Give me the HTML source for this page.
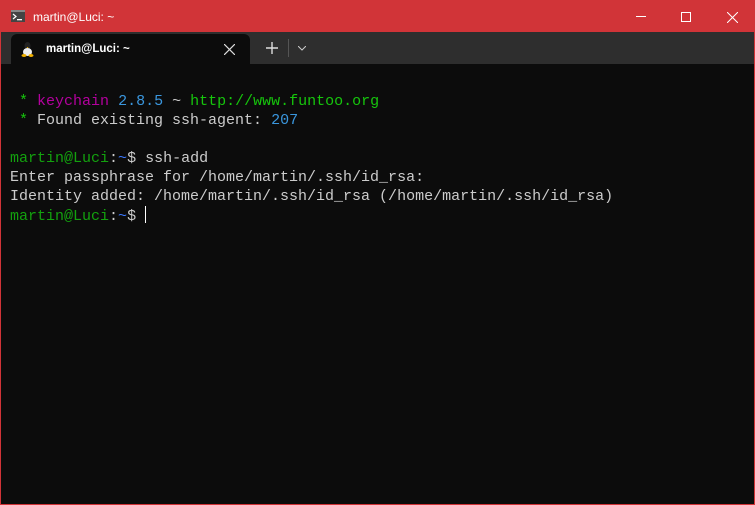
<!DOCTYPE html>
<html><head><meta charset="utf-8"><style>
*{margin:0;padding:0;box-sizing:border-box}
html,body{width:755px;height:505px;overflow:hidden;background:#0c0c0c}
.win{position:absolute;left:0;top:0;width:755px;height:505px;border:1px solid #d13438;background:#0c0c0c}
.title{position:absolute;left:0;top:0;width:753px;height:31px;background:#d13438;color:#fff;font:12px "Liberation Sans",sans-serif}
.tabbar{position:absolute;left:0;top:31px;width:753px;height:32px;background:#2e2e2e}
.tab{position:absolute;left:10px;top:2px;width:239px;height:30px;background:#0c0c0c;border-radius:6px 6px 0 0;color:#fff;font:bold 11.5px "Liberation Sans",sans-serif}
.term{position:absolute;left:9px;top:91px;font:15px/19px "Liberation Mono",monospace;letter-spacing:0;color:#cccccc;white-space:pre}
.g{color:#16c60c}.m{color:#b4009e}.b{color:#3a96dd}.bl{color:#3b78ff}.gg{color:#13a10e}
</style></head><body><div class="win">
<div class="title">
<svg style="position:absolute;left:10px;top:9px" width="14" height="12"><rect x="0" y="0" width="14" height="12" fill="#444"/><rect x="0" y="0" width="14" height="2" fill="#888"/><path d="M2 4l3 2.5-3 2.5" stroke="#fff" fill="none" stroke-width="1.2"/><rect x="6" y="9" width="5" height="1.3" fill="#fff"/></svg>
<span style="position:absolute;left:32px;top:9px">martin@Luci: ~</span>
<div style="position:absolute;left:635px;top:15px;width:10px;height:1px;background:#fff"></div>
<div style="position:absolute;left:680px;top:11px;width:10px;height:10px;border:1px solid #fff"></div>
<svg style="position:absolute;left:726px;top:11px" width="11" height="11"><path d="M0 0L11 11M11 0L0 11" stroke="#fff" stroke-width="1"/></svg>
</div>
<div class="tabbar">
<div class="tab">
<svg style="position:absolute;left:10px;top:8px" width="13" height="15"><ellipse cx="6.5" cy="4" rx="3" ry="4" fill="#222"/><ellipse cx="6.5" cy="10" rx="4.5" ry="4" fill="#eee"/><ellipse cx="3" cy="13.5" rx="2.5" ry="1.5" fill="#f0b000"/><ellipse cx="10" cy="13.5" rx="2.5" ry="1.5" fill="#f0b000"/><path d="M5.5 5h2l-1 1.2z" fill="#f0b000"/></svg>
<span style="position:absolute;left:35px;top:9px">martin@Luci: ~</span>
<svg style="position:absolute;left:213px;top:10px" width="11" height="11"><path d="M0 0L11 11M11 0L0 11" stroke="#ddd" stroke-width="1.2"/></svg>
</div>
<svg style="position:absolute;left:265px;top:10px" width="12" height="12"><path d="M6 0V12M0 6H12" stroke="#ddd" stroke-width="1.4"/></svg>
<div style="position:absolute;left:287px;top:7px;width:1px;height:18px;background:#555"></div>
<svg style="position:absolute;left:297px;top:14px" width="8" height="5"><path d="M0 0L4 4L8 0" stroke="#ccc" fill="none"/></svg>
</div>
<div class="term"><span class="g"> *</span> <span class="m">keychain</span> <span class="b">2.8.5</span> ~ <span class="g">http://www.funtoo.org</span>
<span class="g"> *</span> Found existing ssh-agent: <span class="b">207</span>

<span class="gg">martin@Luci</span>:<span class="bl">~</span>$ ssh-add
Enter passphrase for /home/martin/.ssh/id_rsa:
Identity added: /home/martin/.ssh/id_rsa (/home/martin/.ssh/id_rsa)
<span class="gg">martin@Luci</span>:<span class="bl">~</span>$ <span style="display:inline-block;width:1px;height:17px;background:#fff;vertical-align:-3px"></span></div>
</div></body></html>
